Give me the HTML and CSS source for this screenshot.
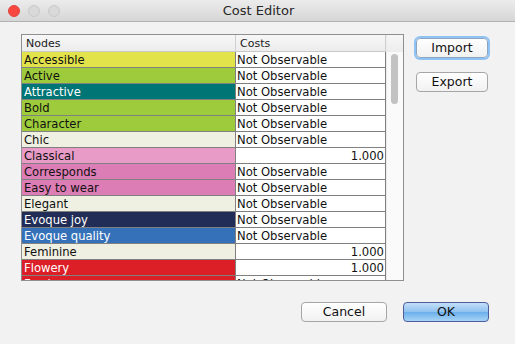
FILE: index.html
```html
<!DOCTYPE html>
<html>
<head>
<meta charset="utf-8">
<link rel="stylesheet" href="styles.css">
</head>
<body>
<div class="window">
  <div class="titlebar">
    <div class="lights">
      <span class="light red"></span>
      <span class="light"></span>
      <span class="light"></span>
    </div>
    <div class="title">Cost Editor</div>
  </div>
  <div class="body">
    <div class="pane">
      <div class="table">
        <div class="head">
          <div class="hcell nodes">Nodes</div>
          <div class="hcell costs">Costs</div>
        </div>
        <div class="row"><div class="node c-yel">Accessible</div><div class="cost">Not Observable</div></div>
        <div class="row"><div class="node c-grn">Active</div><div class="cost">Not Observable</div></div>
        <div class="row"><div class="node c-teal light-t">Attractive</div><div class="cost">Not Observable</div></div>
        <div class="row"><div class="node c-grn">Bold</div><div class="cost">Not Observable</div></div>
        <div class="row"><div class="node c-grn">Character</div><div class="cost">Not Observable</div></div>
        <div class="row"><div class="node c-cream">Chic</div><div class="cost">Not Observable</div></div>
        <div class="row"><div class="node c-lpink">Classical</div><div class="cost num">1.000</div></div>
        <div class="row"><div class="node c-pink">Corresponds</div><div class="cost">Not Observable</div></div>
        <div class="row"><div class="node c-pink">Easy to wear</div><div class="cost">Not Observable</div></div>
        <div class="row"><div class="node c-cream">Elegant</div><div class="cost">Not Observable</div></div>
        <div class="row"><div class="node c-navy light-t">Evoque joy</div><div class="cost">Not Observable</div></div>
        <div class="row"><div class="node c-blue light-t">Evoque quality</div><div class="cost">Not Observable</div></div>
        <div class="row"><div class="node c-cream">Feminine</div><div class="cost num">1.000</div></div>
        <div class="row"><div class="node c-red light-t">Flowery</div><div class="cost num">1.000</div></div>
        <div class="row"><div class="node c-red light-t">Fresh</div><div class="cost">Not Observable</div></div>
      </div>
      <div class="scroll">
        <div class="corner"></div>
        <div class="track"><div class="thumb"></div></div>
      </div>
    </div>
    <div class="side">
      <button class="btn focus">Import</button>
      <button class="btn">Export</button>
    </div>
  </div>
  <div class="footer">
    <button class="btn wide">Cancel</button>
    <button class="btn wide default">OK</button>
  </div>
</div>
</body>
</html>
```

FILE: styles.css
```css
* { box-sizing: border-box; }
html, body {
  margin: 0;
  padding: 0;
  width: 515px;
  height: 344px;
  overflow: hidden;
  background: #f2f2f2;
  font-family: "DejaVu Sans", "Liberation Sans", sans-serif;
}
.window {
  width: 515px;
  height: 344px;
  display: flex;
  flex-direction: column;
  background: #f2f2f2;
}
.titlebar {
  height: 22px;
  flex: none;
  display: flex;
  align-items: center;
  position: relative;
  background: linear-gradient(#ececec, #d6d6d6);
  border-bottom: 1px solid #b1b1b1;
}
.lights {
  display: flex;
  gap: 8px;
  padding-left: 8px;
}
.light {
  width: 12px;
  height: 12px;
  border-radius: 50%;
  background: #d9d9d9;
  border: 1px solid #c8c8c8;
}
.light.red {
  background: #f7473f;
  border-color: #e0443e;
}
.title {
  position: absolute;
  left: 0;
  right: 0;
  top: 0;
  line-height: 22px;
  text-align: center;
  font-size: 13px;
  color: #262626;
  padding-left: 2px;
}
.body {
  display: flex;
  padding: 12px 0 0 21px;
  gap: 12px;
  flex: none;
}
.pane {
  width: 383px;
  height: 247px;
  border: 1px solid #8f8f8f;
  background: #fff;
  display: flex;
  overflow: hidden;
}
.table {
  width: 364px;
  flex: none;
  display: flex;
  flex-direction: column;
}
.head {
  height: 17px;
  flex: none;
  display: flex;
  background: linear-gradient(#f7f7f7, #ececec);
  border-bottom: 1px solid #c9c9c9;
}
.hcell {
  font-size: 11px;
  line-height: 17px;
  color: #1a1a1a;
  padding-left: 4px;
}
.hcell.nodes {
  width: 214px;
  border-right: 1px solid #cfcfcf;
}
.hcell.costs {
  width: 150px;
  border-right: 1px solid #cfcfcf;
}
.row {
  height: 16px;
  flex: none;
  display: flex;
  border-bottom: 1px solid #808080;
}
.node {
  width: 214px;
  border-right: 1px solid #808080;
  font-size: 11.6px;
  line-height: 16px;
  padding-left: 2px;
  color: #111;
  white-space: nowrap;
}
.cost {
  width: 150px;
  border-right: 1px solid #808080;
  font-size: 11.6px;
  line-height: 16px;
  padding-left: 1px;
  padding-right: 1px;
  color: #111;
  background: #fff;
  white-space: nowrap;
}
.cost.num { text-align: right; }
.light-t { color: #fff; }
.c-yel { background: #e2e34b; }
.c-grn { background: #9ecb3b; }
.c-teal { background: #007575; }
.c-cream { background: #eff0e2; }
.c-lpink { background: #e89bc6; }
.c-pink { background: #dd7db5; }
.c-navy { background: #212d56; }
.c-blue { background: #3571b9; }
.c-red { background: #dc1f27; }
.scroll {
  flex: 1;
  display: flex;
  flex-direction: column;
  background: #fafafa;
  border-left: 1px solid #ececec;
}
.corner {
  height: 17px;
  flex: none;
  background: linear-gradient(#f7f7f7, #ececec);
}
.track {
  flex: 1;
  padding: 2px 0 0 4px;
}
.thumb {
  width: 7px;
  height: 50px;
  border-radius: 4px;
  background: #c2c2c2;
}
.side {
  display: flex;
  flex-direction: column;
  gap: 14px;
  padding-top: 4px;
}
.btn {
  width: 72px;
  height: 20px;
  padding: 0;
  font-family: "DejaVu Sans", "Liberation Sans", sans-serif;
  font-size: 12.5px;
  line-height: 18px;
  color: #111;
  background: linear-gradient(#ffffff, #f1f1f1);
  border: 1px solid #a6a6a6;
  border-radius: 4px;
}
.btn.focus {
  box-shadow: 0 0 0 2px #8fc3f4;
  border-color: #8aa6c4;
}
.footer {
  display: flex;
  justify-content: flex-end;
  gap: 16px;
  padding: 21px 26px 0 0;
}
.btn.wide { width: 86px; }
.btn.default {
  border-color: #4e5d9a;
  background: linear-gradient(#c4e0f9 0%, #8ec1ef 50%, #6aaeea 51%, #a8d4f7 100%);
}
```
